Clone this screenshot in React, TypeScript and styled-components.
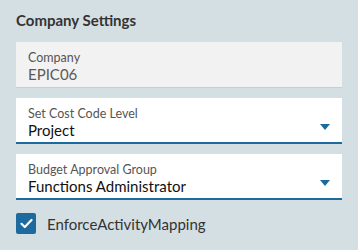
import React from "react";
import styled, { createGlobalStyle } from "styled-components";

const Global = createGlobalStyle`
  html, body { margin: 0; padding: 0; background: #d3dfe3; }
  body { font-family: Lato, "Open Sans", sans-serif; }
`;

const Page = styled.div`
  width: 358px;
  height: 250px;
  box-sizing: border-box;
  padding: 11px 16px 0 16px;
  background: #d3dfe3;
  display: flex;
  flex-direction: column;
`;

const Title = styled.h2`
  margin: 0 0 13px 0;
  font-size: 15px;
  font-weight: 700;
  color: #333;
  line-height: 18px;
`;

const Fields = styled.div`
  display: flex;
  flex-direction: column;
  gap: 10px;
`;

const FieldBox = styled.div<{ $disabled?: boolean }>`
  position: relative;
  height: 46px;
  box-sizing: border-box;
  padding: 8px 12px 0 12px;
  background: ${(p) => (p.$disabled ? "#f2f2f2" : "#ffffff")};
  border-bottom: ${(p) => (p.$disabled ? "1px solid #c8cfd2" : "2px solid #1d6a9e")};
  display: flex;
  flex-direction: column;
`;

const Label = styled.span`
  font-size: 12.5px;
  line-height: 15px;
  color: #555;
`;

const Value = styled.span<{ $disabled?: boolean }>`
  font-size: 15px;
  line-height: 18px;
  color: ${(p) => (p.$disabled ? "#5a5a5a" : "#111")};
`;

const Caret = styled.span`
  position: absolute;
  right: 12px;
  top: 26px;
  width: 0;
  height: 0;
  border-left: 5px solid transparent;
  border-right: 5px solid transparent;
  border-top: 6px solid #1d6a9e;
`;

const CheckRow = styled.label`
  display: flex;
  align-items: center;
  gap: 11px;
  margin-top: 13px;
  font-size: 15px;
  color: #333;
`;

const Box = styled.span`
  width: 20px;
  height: 21px;
  border-radius: 2px;
  background: #1d6a9e;
  display: flex;
  align-items: center;
  justify-content: center;
`;

type FieldProps = { label: string; value: string; disabled?: boolean };

function Field({ label, value, disabled }: FieldProps) {
  return (
    <FieldBox $disabled={disabled}>
      <Label>{label}</Label>
      <Value $disabled={disabled}>{value}</Value>
      {!disabled && <Caret />}
    </FieldBox>
  );
}

export default function App() {
  return (
    <>
      <Global />
      <Page>
        <Title>Company Settings</Title>
        <Fields>
          <Field label="Company" value="EPIC06" disabled />
          <Field label="Set Cost Code Level" value="Project" />
          <Field label="Budget Approval Group" value="Functions Administrator" />
        </Fields>
        <CheckRow>
          <Box>
            <svg width="13" height="11" viewBox="0 0 13 11">
              <path d="M1.5 5.8 L4.8 9 L11.5 2" fill="none" stroke="#fff" strokeWidth="2.2" strokeLinecap="round" strokeLinejoin="round" />
            </svg>
          </Box>
          EnforceActivityMapping
        </CheckRow>
      </Page>
    </>
  );
}
